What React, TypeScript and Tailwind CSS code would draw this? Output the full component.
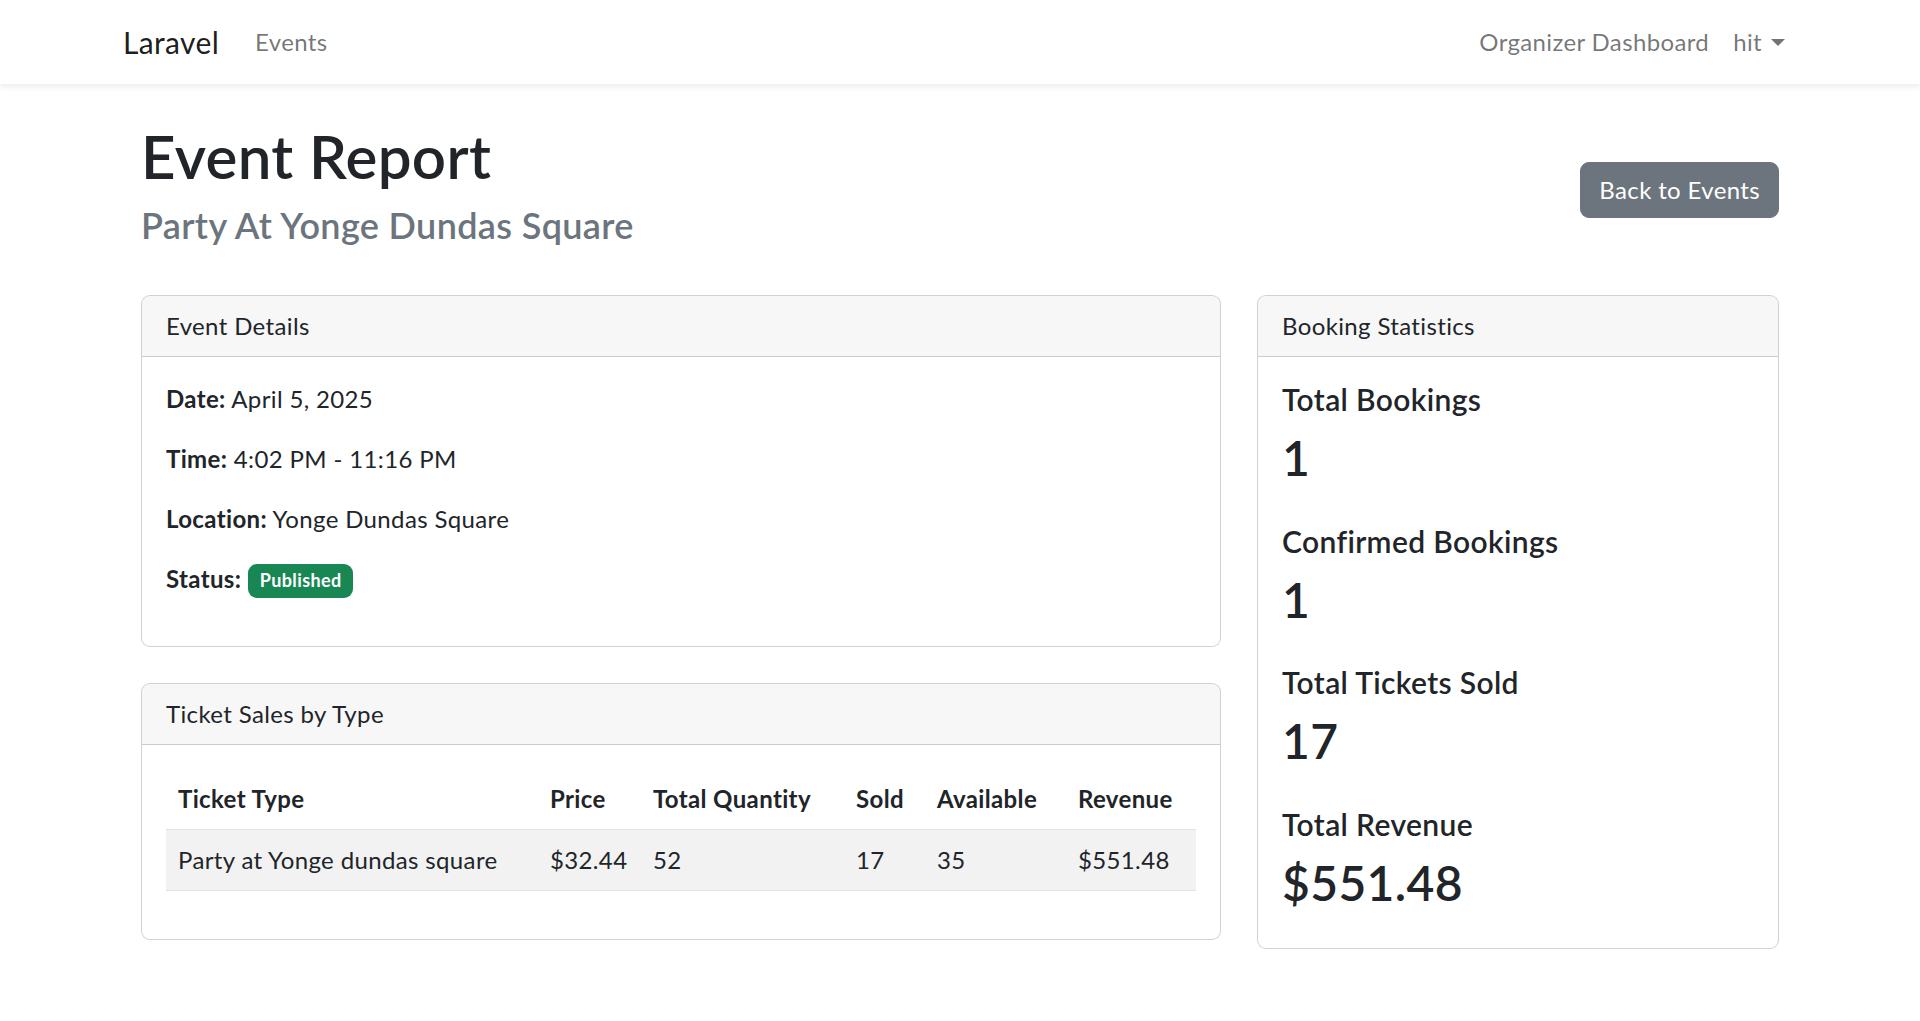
import React from "react";

const tickets = [
  {
    name: "Party at Yonge dundas square",
    price: "$32.44",
    total: 52,
    sold: 17,
    available: 35,
    revenue: "$551.48",
  },
];

const stats = [
  { label: "Total Bookings", value: "1" },
  { label: "Confirmed Bookings", value: "1" },
  { label: "Total Tickets Sold", value: "17" },
  { label: "Total Revenue", value: "$551.48" },
];

function Card({ title, children }: { title: string; children: React.ReactNode }) {
  return (
    <div className="bg-white border border-black/[0.175] rounded-[9px] overflow-hidden">
      <div className="px-[24px] py-[12px] bg-black/[0.03] border-b border-black/[0.175]">{title}</div>
      <div className="p-[24px]">{children}</div>
    </div>
  );
}

export default function App() {
  return (
    <div className="min-h-screen bg-white text-[#212529] font-['Lato','Segoe_UI',sans-serif] text-[24px] leading-[1.5] tracking-[0.015em]">
      {/* Navbar */}
      <nav className="bg-white shadow-[0_3px_6px_rgba(0,0,0,0.075)] py-[12px]">
        <div className="mx-auto w-[1710px] px-[18px] flex items-center justify-between">
          <div className="flex items-center">
            <a className="text-[30px] leading-[1.5] text-black/90 mr-[24px]">Laravel</a>
            <a className="px-[12px] py-[12px] text-black/55">Events</a>
          </div>
          <div className="flex items-center">
            <a className="px-[12px] py-[12px] text-black/55">Organizer Dashboard</a>
            <a className="px-[12px] py-[12px] text-black/55 flex items-center">
              hit
              <span className="inline-block w-0 h-0 ml-[9px] border-t-[7px] border-x-[7px] border-t-[#737373] border-x-transparent" />
            </a>
          </div>
        </div>
      </nav>

      <main className="py-[36px]">
        <div className="mx-auto w-[1710px] px-[36px]">
          {/* Header */}
          <div className="flex items-center justify-between mb-[36px]">
            <div>
              <h1 className="text-[60px] font-semibold leading-[1.2] mb-[12px]">Event Report</h1>
              <h4 className="text-[36px] font-semibold leading-[1.2] text-[#6c757d] mb-[12px]">
                Party At Yonge Dundas Square
              </h4>
            </div>
            <button className="bg-[#6c757d] border border-[#6c757d] text-white px-[18px] py-[9px] rounded-[9px] leading-[1.5]">
              Back to Events
            </button>
          </div>

          <div className="flex items-start gap-[36px]">
            {/* Left column */}
            <div className="w-[1080px] flex flex-col gap-[36px]">
              <Card title="Event Details">
                <p className="mb-[24px]">
                  <strong className="font-bold">Date:</strong> April 5, 2025
                </p>
                <p className="mb-[24px]">
                  <strong className="font-bold">Time:</strong> 4:02 PM - 11:16 PM
                </p>
                <p className="mb-[24px]">
                  <strong className="font-bold">Location:</strong> Yonge Dundas Square
                </p>
                <p className="mb-[24px]">
                  <strong className="font-bold">Status:</strong>{" "}
                  <span className="inline-block px-[12px] py-[7px] text-[18px] font-bold leading-[1.1] rounded-[9px] bg-[#198754] text-white align-[1px]">
                    Published
                  </span>
                </p>
              </Card>

              <Card title="Ticket Sales by Type">
                <table className="w-full table-fixed border-collapse mb-[24px]">
                  <thead>
                    <tr>
                      <th className="w-[372px] text-left font-bold p-[12px] border-b border-[#dee2e6]">Ticket Type</th>
                      <th className="w-[103px] text-left font-bold p-[12px] border-b border-[#dee2e6]">Price</th>
                      <th className="w-[203px] text-left font-bold p-[12px] border-b border-[#dee2e6]">Total Quantity</th>
                      <th className="w-[81px] text-left font-bold p-[12px] border-b border-[#dee2e6]">Sold</th>
                      <th className="w-[141px] text-left font-bold p-[12px] border-b border-[#dee2e6]">Available</th>
                      <th className="w-[130px] text-left font-bold p-[12px] border-b border-[#dee2e6]">Revenue</th>
                    </tr>
                  </thead>
                  <tbody>
                    {tickets.map((t) => (
                      <tr key={t.name} className="bg-[#f2f2f2]">
                        <td className="p-[12px] border-b border-[#dee2e6]">{t.name}</td>
                        <td className="p-[12px] border-b border-[#dee2e6]">{t.price}</td>
                        <td className="p-[12px] border-b border-[#dee2e6]">{t.total}</td>
                        <td className="p-[12px] border-b border-[#dee2e6]">{t.sold}</td>
                        <td className="p-[12px] border-b border-[#dee2e6]">{t.available}</td>
                        <td className="p-[12px] border-b border-[#dee2e6]">{t.revenue}</td>
                      </tr>
                    ))}
                  </tbody>
                </table>
              </Card>
            </div>

            {/* Right column */}
            <div className="flex-1">
              <Card title="Booking Statistics">
                {stats.map((s, i) => (
                  <div key={s.label} className={i < stats.length - 1 ? "mb-[36px]" : ""}>
                    <h5 className="text-[30px] font-semibold leading-[1.2] mb-[12px]">{s.label}</h5>
                    <h2 className="text-[48px] font-semibold leading-[1.2] mb-[12px]">{s.value}</h2>
                  </div>
                ))}
              </Card>
            </div>
          </div>
        </div>
      </main>
    </div>
  );
}
